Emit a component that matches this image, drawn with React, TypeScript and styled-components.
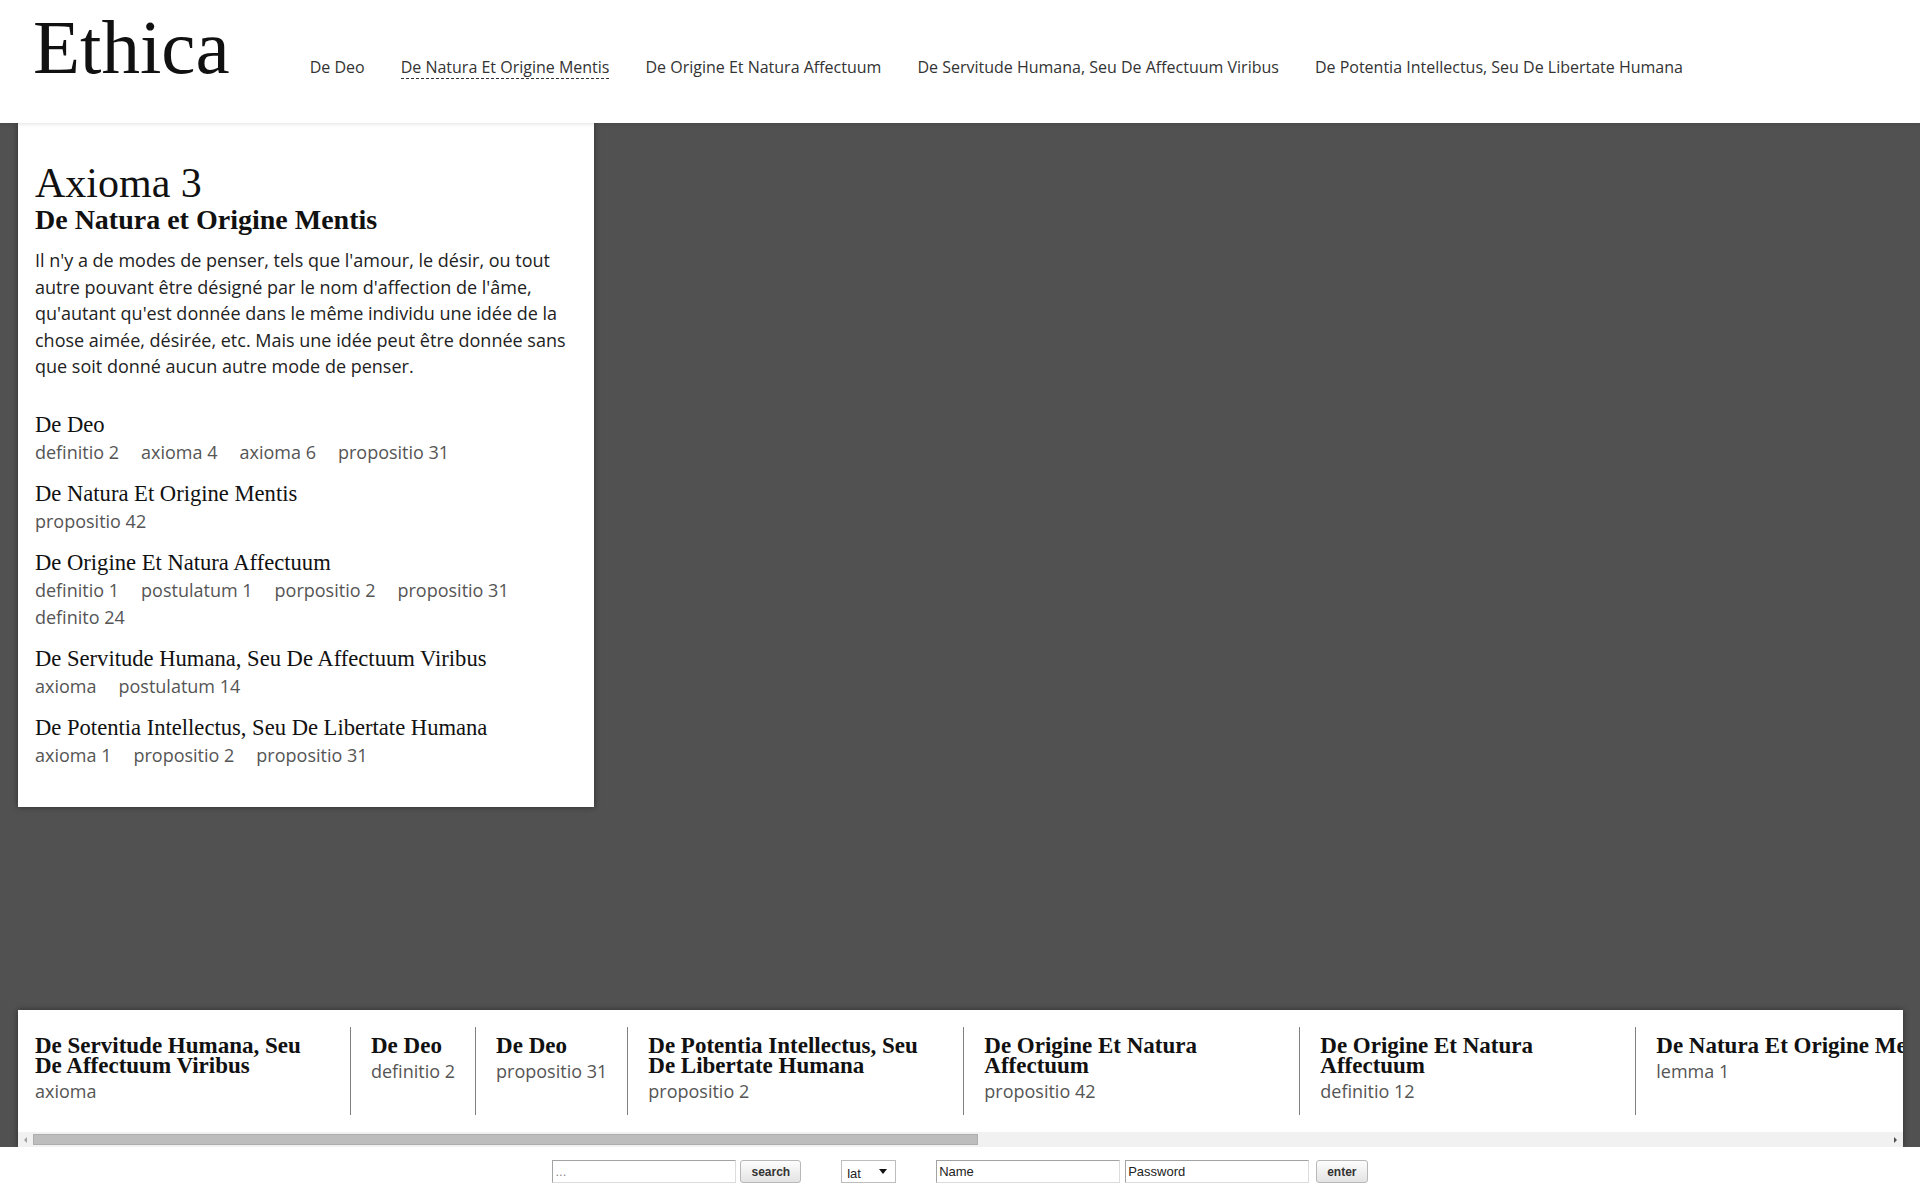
import React, { useLayoutEffect, useRef, useState } from "react";
import styled, { createGlobalStyle } from "styled-components";

const GlobalStyle = createGlobalStyle`
  html, body {
    margin: 0;
    padding: 0;
    background: #ffffff;
  }
  #root {
    min-height: 100vh;
    display: flex;
    flex-direction: column;
  }
`;

const SERIF = `"Liberation Serif", "DejaVu Serif", serif`;
const SANS = `"Open Sans", "Liberation Sans", sans-serif`;

const parts = [
  "De Deo",
  "De Natura Et Origine Mentis",
  "De Origine Et Natura Affectuum",
  "De Servitude Humana, Seu De Affectuum Viribus",
  "De Potentia Intellectus, Seu De Libertate Humana",
];

const references = [
  { part: "De Deo", items: ["definitio 2", "axioma 4", "axioma 6", "propositio 31"] },
  { part: "De Natura Et Origine Mentis", items: ["propositio 42"] },
  {
    part: "De Origine Et Natura Affectuum",
    items: ["definitio 1", "postulatum 1", "porpositio 2", "propositio 31", "definito 24"],
  },
  { part: "De Servitude Humana, Seu De Affectuum Viribus", items: ["axioma", "postulatum 14"] },
  { part: "De Potentia Intellectus, Seu De Libertate Humana", items: ["axioma 1", "propositio 2", "propositio 31"] },
];

const recent = [
  { part: "De Servitude Humana, Seu De Affectuum Viribus", ref: "axioma" },
  { part: "De Deo", ref: "definitio 2" },
  { part: "De Deo", ref: "propositio 31" },
  { part: "De Potentia Intellectus, Seu De Libertate Humana", ref: "propositio 2" },
  { part: "De Origine Et Natura Affectuum", ref: "propositio 42" },
  { part: "De Origine Et Natura Affectuum", ref: "definitio 12" },
  { part: "De Natura Et Origine Mentis", ref: "lemma 1" },
  { part: "De Servitude Humana, Seu De Affectuum Viribus", ref: "propositio 18" },
  { part: "De Deo", ref: "axioma 4" },
  { part: "De Potentia Intellectus, Seu De Libertate Humana", ref: "axioma 1" },
  { part: "De Origine Et Natura Affectuum", ref: "definitio 24" },
  { part: "De Natura Et Origine Mentis", ref: "propositio 13" },
  { part: "De Deo", ref: "propositio 16" },
  { part: "De Deo", ref: "propositio 36" },
];

const App: React.FC = () => {
  const stripRef = useRef<HTMLDivElement>(null);
  const [thumb, setThumb] = useState(0.5);

  // the strip is clipped, the bar below shows how much of it is in view
  useLayoutEffect(() => {
    const el = stripRef.current;
    if (el && el.scrollWidth > 0) {
      setThumb(Math.min(1, el.clientWidth / el.scrollWidth));
    }
  }, []);

  return (
    <>
      <GlobalStyle />
      <Header>
        <Logo>Ethica</Logo>
        <Nav>
          {parts.map((p) => (
            <NavLink key={p} href="#" $active={p === "De Natura Et Origine Mentis"}>
              {p}
            </NavLink>
          ))}
        </Nav>
      </Header>

      <Main>
        <Card>
          <Title>Axioma 3</Title>
          <Subtitle>De Natura et Origine Mentis</Subtitle>
          <Text>
            Il n'y a de modes de penser, tels que l'amour, le désir, ou tout autre pouvant être désigné par le
            nom d'affection de l'âme, qu'autant qu'est donnée dans le même individu une idée de la chose aimée,
            désirée, etc. Mais une idée peut être donnée sans que soit donné aucun autre mode de penser.
          </Text>
          <RefList>
            {references.map((group) => (
              <div key={group.part}>
                <RefPart>{group.part}</RefPart>
                <RefItems>
                  {group.items.map((item) => (
                    <RefLink key={item} href="#">
                      {item}
                    </RefLink>
                  ))}
                </RefItems>
              </div>
            ))}
          </RefList>
        </Card>

        <History>
          <HistoryStrip ref={stripRef}>
            {recent.map((r, index) => (
              <HistoryItem key={index}>
                <HistoryPart>{r.part}</HistoryPart>
                <HistoryRef href="#">{r.ref}</HistoryRef>
              </HistoryItem>
            ))}
          </HistoryStrip>
          <ScrollBar>
            <ScrollArrow $dir="left" />
            <ScrollTrack>
              <ScrollThumb style={{ width: `${thumb * 100}%` }} />
            </ScrollTrack>
            <ScrollArrow $dir="right" />
          </ScrollBar>
        </History>
      </Main>

      <Footer>
        <FormGroup $gap={4}>
          <Field type="text" placeholder="..." />
          <Button type="button">search</Button>
        </FormGroup>
        <SelectBox>
          <Select defaultValue="lat">
            <option value="lat">lat</option>
            <option value="fr">fr</option>
          </Select>
        </SelectBox>
        <FormGroup $gap={5}>
          <Field type="text" defaultValue="Name" />
          <Field type="text" defaultValue="Password" />
          <Button type="button" style={{ marginLeft: 2 }}>
            enter
          </Button>
        </FormGroup>
      </Footer>
    </>
  );
};

const Header = styled.header`
  position: relative;
  z-index: 2;
  height: 123px;
  box-sizing: border-box;
  padding: 9px 0 0 33px;
  display: flex;
  align-items: baseline;
  background: #ffffff;
  box-shadow: 0 1px 4px rgba(0, 0, 0, 0.12);
`;

const Logo = styled.div`
  font-family: ${SERIF};
  font-size: 77px;
  line-height: 77px;
  color: #111;
  margin-right: 80px;
`;

const Nav = styled.nav`
  display: flex;
  align-items: baseline;
  gap: 36px;
`;

const NavLink = styled.a<{ $active?: boolean }>`
  font-family: ${SANS};
  font-size: 16px;
  color: #333;
  text-decoration: none;
  border-bottom: 1px dashed ${(p) => (p.$active ? "#333" : "transparent")};
`;

const Main = styled.main`
  flex: 1;
  display: flex;
  flex-direction: column;
  align-items: flex-start;
  background: #515151;
  padding: 0 17px 0 18px;
  min-height: 0;
`;

const Card = styled.section`
  width: 576px;
  box-sizing: border-box;
  padding: 38px 17px 38px;
  background: #ffffff;
  box-shadow: 0 0 6px rgba(0, 0, 0, 0.45);
`;

const Title = styled.h1`
  margin: 0;
  font-family: ${SERIF};
  font-weight: normal;
  font-size: 42px;
  line-height: 44px;
  color: #111;
`;

const Subtitle = styled.h2`
  margin: 0;
  font-family: ${SERIF};
  font-weight: bold;
  font-size: 28px;
  line-height: 30px;
  color: #111;
`;

const Text = styled.p`
  margin: 12px 0 0;
  font-family: ${SANS};
  font-size: 18px;
  line-height: 26.5px;
  color: #222;
`;

const RefList = styled.div`
  margin-top: 31px;
  display: flex;
  flex-direction: column;
  gap: 14px;
`;

const RefPart = styled.div`
  font-family: ${SERIF};
  font-size: 22.6px;
  line-height: 28px;
  color: #111;
`;

const RefItems = styled.div`
  display: flex;
  flex-wrap: wrap;
  column-gap: 22px;
`;

const RefLink = styled.a`
  font-family: ${SANS};
  font-size: 18px;
  line-height: 27px;
  color: #555;
  text-decoration: none;
`;

const History = styled.div`
  margin-top: auto;
  align-self: stretch;
  background: #ffffff;
  box-shadow: 0 0 6px rgba(0, 0, 0, 0.45);
`;

const HistoryStrip = styled.div`
  display: flex;
  padding: 17px 0 17px 17px;
  overflow: hidden;
`;

const HistoryItem = styled.div`
  flex: none;
  max-width: 295px;
  padding: 9px 20px 10px;
  border-left: 1px solid #808080;

  &:first-child {
    border-left: none;
    padding-left: 0;
  }
`;

const HistoryPart = styled.div`
  font-family: ${SERIF};
  font-weight: bold;
  font-size: 23px;
  line-height: 20px;
  color: #111;
  margin-bottom: 2px;
`;

const HistoryRef = styled.a`
  display: block;
  font-family: ${SANS};
  font-size: 18px;
  line-height: 27px;
  color: #555;
  text-decoration: none;
`;

const ScrollBar = styled.div`
  display: flex;
  height: 15px;
  background: #f1f1f1;
`;

const ScrollArrow = styled.div<{ $dir: "left" | "right" }>`
  flex: none;
  width: 15px;
  display: flex;
  align-items: center;
  justify-content: center;

  &::before {
    content: "";
    border-top: 3px solid transparent;
    border-bottom: 3px solid transparent;
    ${(p) => (p.$dir === "left" ? "border-right: 3px solid #a3a3a3;" : "border-left: 3px solid #505050;")}
  }
`;

const ScrollTrack = styled.div`
  flex: 1;
  display: flex;
  align-items: stretch;
  padding: 2px 0;
`;

const ScrollThumb = styled.div`
  background: #bdbdbd;
  box-shadow: inset 0 0 0 1px #adadad;
`;

const Footer = styled.footer`
  height: 53px;
  box-sizing: border-box;
  padding-top: 13px;
  display: flex;
  justify-content: center;
  align-items: flex-start;
  gap: 40px;
  background: #ffffff;
`;

const FormGroup = styled.div<{ $gap: number }>`
  display: flex;
  gap: ${(p) => p.$gap}px;
`;

const Field = styled.input`
  width: 184px;
  height: 23px;
  box-sizing: border-box;
  margin: 0;
  padding: 0 2px;
  border: 1px solid;
  border-color: #a3a3a3 #dcdcdc #dcdcdc #a3a3a3;
  font-family: "Liberation Sans", Arial, sans-serif;
  font-size: 13px;
  color: #222;
  outline: none;

  &::placeholder {
    color: #888;
  }
`;

const Button = styled.button`
  height: 23px;
  box-sizing: border-box;
  margin: 0;
  padding: 0 10px;
  border: 1px solid #b8b8b8;
  border-radius: 3px;
  background: linear-gradient(#fdfdfd, #e3e3e3);
  font-family: "Liberation Sans", Arial, sans-serif;
  font-size: 12px;
  font-weight: bold;
  color: #333;
`;

const SelectBox = styled.div`
  position: relative;
  width: 55px;
  height: 23px;

  &::after {
    content: "";
    position: absolute;
    right: 9px;
    top: 9px;
    border-left: 4px solid transparent;
    border-right: 4px solid transparent;
    border-top: 5px solid #111;
    pointer-events: none;
  }
`;

const Select = styled.select`
  appearance: none;
  width: 55px;
  height: 23px;
  box-sizing: border-box;
  margin: 0;
  padding: 4px 0 0 5px;
  border: 1px solid #bdbdbd;
  border-radius: 0;
  background: #ffffff;
  font-family: "Liberation Sans", Arial, sans-serif;
  font-size: 13px;
  color: #222;
`;

export default App;
